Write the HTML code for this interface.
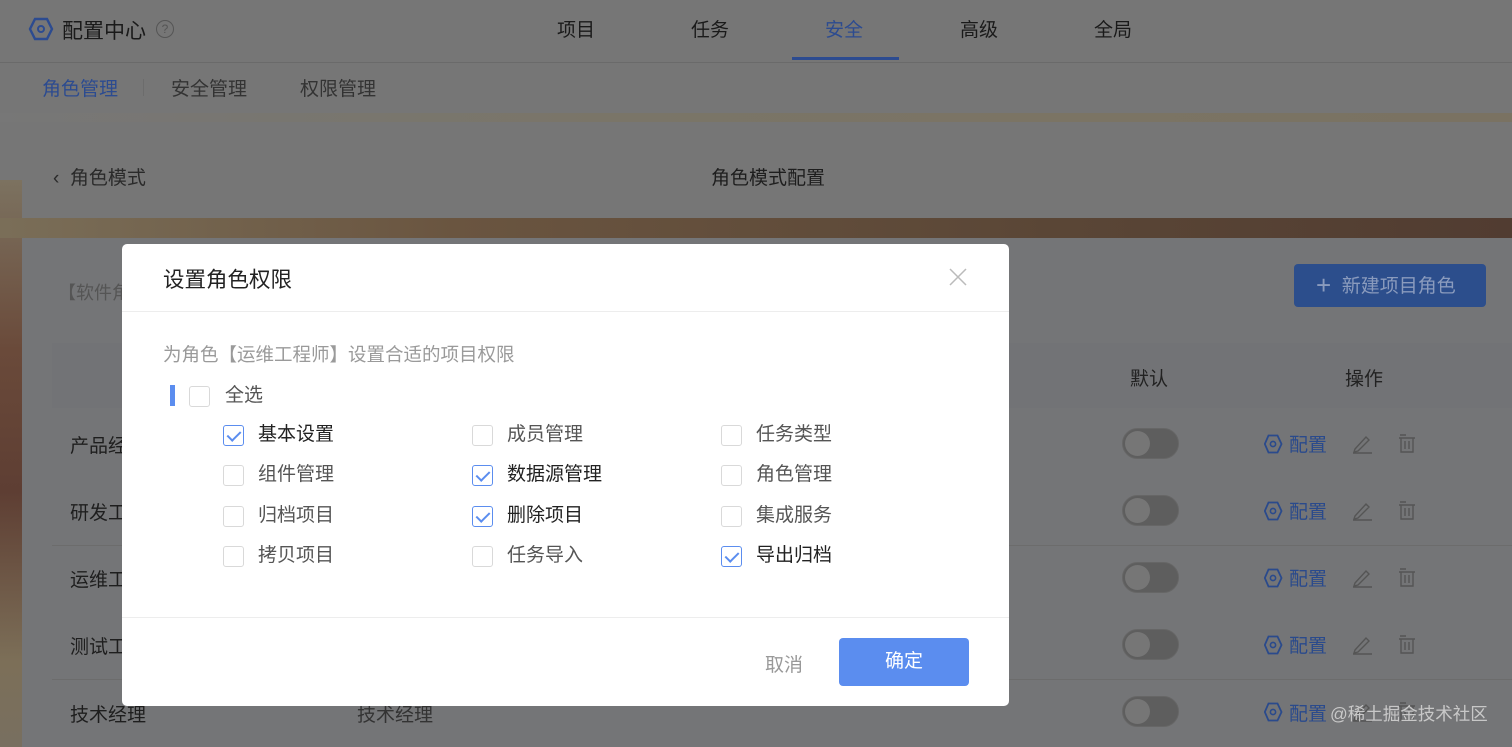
<!DOCTYPE html>
<html><head><meta charset="utf-8"><style>
*{margin:0;padding:0;box-sizing:border-box}
body{width:1512px;height:747px;overflow:hidden;position:relative;background:#767676;font-family:"Liberation Sans","Noto Sans CJK SC",sans-serif;color:#222}
.a{position:absolute;white-space:nowrap}
.cb{position:absolute;width:21px;height:21px;border:1px solid #d9d9d9;border-radius:3px;background:#fff}
.cb.on{border-color:#5b8def}
.cb.on:after{content:"";position:absolute;left:6px;top:2px;width:6px;height:11px;border:solid #5b8def;border-width:0 2px 2px 0;transform:rotate(45deg)}
.lbl{position:absolute;font-size:19px;line-height:24px;color:#555}
.lbl.d{color:#222}
.tg{position:absolute;left:1122px;width:57px;height:31px;border-radius:16px;background:#5e5e5e;border:1px solid #666}
.tg:after{content:"";position:absolute;left:2px;top:2px;width:25px;height:25px;border-radius:50%;background:#767676}
.cfg{position:absolute;left:1289px;font-size:19px;color:#2a4a8c}
.row{position:absolute;left:70px;font-size:19px;color:#1e1e1e}
</style></head><body>
<div class="a" style="left:0;top:62px;width:1512px;height:1px;background:#6a6a6a"></div>
<svg class="a" style="left:28px;top:17px" width="26" height="24" viewBox="0 0 26 24"><polygon points="7,2 19,2 24,12 19,22 7,22 2,12" fill="none" stroke="#2c4b90" stroke-width="2.4"/><circle cx="13" cy="12" r="3" fill="none" stroke="#2c4b90" stroke-width="2"/></svg>
<div class="a" style="left:62px;top:15px;font-size:21px;color:#1a1a1a">配置中心</div>
<div class="a" style="left:156px;top:20px;width:18px;height:18px;border:1px solid #555;border-radius:50%;font-size:12px;line-height:16px;text-align:center;color:#555">?</div>
<div class="a" style="left:557px;top:15px;font-size:19px;color:#1a1a1a">项目</div>
<div class="a" style="left:691px;top:15px;font-size:19px;color:#1a1a1a">任务</div>
<div class="a" style="left:825px;top:15px;font-size:19px;color:#2c4b90">安全</div>
<div class="a" style="left:960px;top:15px;font-size:19px;color:#1a1a1a">高级</div>
<div class="a" style="left:1094px;top:15px;font-size:19px;color:#1a1a1a">全局</div>
<div class="a" style="left:792px;top:57px;width:107px;height:3px;background:#2c4b90"></div>
<div class="a" style="left:42px;top:74px;font-size:19px;color:#2c4b90">角色管理</div>
<div class="a" style="left:143px;top:79px;width:1px;height:17px;background:#6c6c6c"></div>
<div class="a" style="left:171px;top:74px;font-size:19px;color:#333">安全管理</div>
<div class="a" style="left:300px;top:74px;font-size:19px;color:#333">权限管理</div>
<div class="a" style="left:0;top:113px;width:1512px;height:9px;background:linear-gradient(90deg,#777 0%,#7a7568 40%,#7b7464 70%,#7a7262 100%)"></div>
<div class="a" style="left:0;top:180px;width:22px;height:567px;background:linear-gradient(180deg,#7c7260 0%,#6a4a3a 30%,#5e3e33 55%,#7c6f58 85%,#786f60 100%)"></div>
<div class="a" style="left:0;top:218px;width:1512px;height:20px;background:linear-gradient(90deg,#7a6e58 0%,#6a5540 30%,#5a4636 70%,#513c31 100%)"></div>
<div class="a" style="left:53px;top:163px;font-size:19px;color:#2a2a2a">‹&nbsp; 角色模式</div>
<div class="a" style="left:711px;top:163px;font-size:19px;color:#1e1e1e">角色模式配置</div>
<div class="a" style="left:22px;top:238px;width:1490px;height:509px;background:#747577"></div>
<div class="a" style="left:58px;top:279px;font-size:18px;color:#555">【软件角</div>
<div class="a" style="left:1294px;top:264px;width:192px;height:43px;background:#2c4e8c;border-radius:4px;color:#8a9bbd;font-size:19px;line-height:43px;padding-left:22px"><span style="font-size:26px;vertical-align:-2px;font-weight:300">+</span>&nbsp; 新建项目角色</div>
<div class="a" style="left:52px;top:343px;width:1460px;height:65px;background:#727376"></div>
<div class="a" style="left:1130px;top:364px;font-size:19px;color:#222">默认</div>
<div class="a" style="left:1345px;top:364px;font-size:19px;color:#222">操作</div>
<div class="a" style="left:52px;top:545px;width:1460px;height:1px;background:#6c6c6c"></div>
<div class="a" style="left:52px;top:679px;width:1460px;height:1px;background:#6c6c6c"></div>
<div class="row" style="top:431px">产品经</div>
<div class="row" style="top:498px">研发工</div>
<div class="row" style="top:565px">运维工</div>
<div class="row" style="top:632px">测试工</div>
<div class="row" style="top:700px">技术经理</div>
<div class="a" style="left:357px;top:700px;font-size:19px;color:#333">技术经理</div>
<div class="tg" style="top:428px"></div><div class="tg" style="top:495px"></div><div class="tg" style="top:562px"></div><div class="tg" style="top:629px"></div><div class="tg" style="top:696px"></div>
<div class="cfg" style="top:430px">配置</div>
<div class="cfg" style="top:497px">配置</div>
<div class="cfg" style="top:564px">配置</div>
<div class="cfg" style="top:631px">配置</div>
<div class="cfg" style="top:699px">配置</div>
<svg class="a" style="left:1264px;top:434px" width="160" height="300" viewBox="0 0 160 300">
<defs><g id="p">
<polygon points="4.5,1.5 13.5,1.5 17.5,10 13.5,18.5 4.5,18.5 0.8,10" fill="none" stroke="#2a4a8c" stroke-width="1.8"/><circle cx="9" cy="10" r="2.6" fill="none" stroke="#2a4a8c" stroke-width="1.6"/>
<g fill="none" stroke="#555" stroke-width="1.4"><path d="M89 19 L108 19 M91 15 L102 3 L105 6 L94 17 L90 18 Z"/><path d="M136 1h6M135 4h16M137 4v14h12V4M141 7v8M145 7v8"/></g></g></defs>
<use href="#p"/><use href="#p" y="67"/><use href="#p" y="134"/><use href="#p" y="201"/><use href="#p" y="268"/></svg>
<div class="a" style="left:1330px;top:701px;font-size:17.5px;color:#c8c8c8">@稀土掘金技术社区</div>
<div class="a" style="left:122px;top:244px;width:887px;height:462px;background:#fff;border-radius:5px"></div>
<div class="a" style="left:163px;top:263px;font-size:21.5px;color:#222">设置角色权限</div>
<svg class="a" style="left:949px;top:268px" width="18" height="18"><path d="M1 1L17 17M17 1L1 17" stroke="#bbb" stroke-width="1.5"/></svg>
<div class="a" style="left:122px;top:311px;width:887px;height:1px;background:#ededed"></div>
<div class="a" style="left:163px;top:341px;font-size:18.5px;color:#9a9a9a">为角色【运维工程师】设置合适的项目权限</div>
<div class="a" style="left:170px;top:385px;width:5px;height:21px;background:#5b8def"></div>
<div class="cb" style="left:189px;top:386px"></div><div class="lbl" style="left:225px;top:384px">全选</div>
<div class="cb on" style="left:223px;top:425px"></div><div class="lbl d" style="left:258px;top:423px">基本设置</div>
<div class="cb" style="left:472px;top:425px"></div><div class="lbl" style="left:507px;top:423px">成员管理</div>
<div class="cb" style="left:721px;top:425px"></div><div class="lbl" style="left:756px;top:423px">任务类型</div>
<div class="cb" style="left:223px;top:465px"></div><div class="lbl" style="left:258px;top:463px">组件管理</div>
<div class="cb on" style="left:472px;top:465px"></div><div class="lbl d" style="left:507px;top:463px">数据源管理</div>
<div class="cb" style="left:721px;top:465px"></div><div class="lbl" style="left:756px;top:463px">角色管理</div>
<div class="cb" style="left:223px;top:506px"></div><div class="lbl" style="left:258px;top:504px">归档项目</div>
<div class="cb on" style="left:472px;top:506px"></div><div class="lbl d" style="left:507px;top:504px">删除项目</div>
<div class="cb" style="left:721px;top:506px"></div><div class="lbl" style="left:756px;top:504px">集成服务</div>
<div class="cb" style="left:223px;top:546px"></div><div class="lbl" style="left:258px;top:544px">拷贝项目</div>
<div class="cb" style="left:472px;top:546px"></div><div class="lbl" style="left:507px;top:544px">任务导入</div>
<div class="cb on" style="left:721px;top:546px"></div><div class="lbl d" style="left:756px;top:544px">导出归档</div>
<div class="a" style="left:122px;top:617px;width:887px;height:1px;background:#ededed"></div>
<div class="a" style="left:765px;top:650px;font-size:19px;color:#999">取消</div>
<div class="a" style="left:839px;top:638px;width:130px;height:48px;background:#5b8def;border-radius:4px;color:#fff;font-size:19px;line-height:48px;text-align:center">确定</div>
</body></html>
